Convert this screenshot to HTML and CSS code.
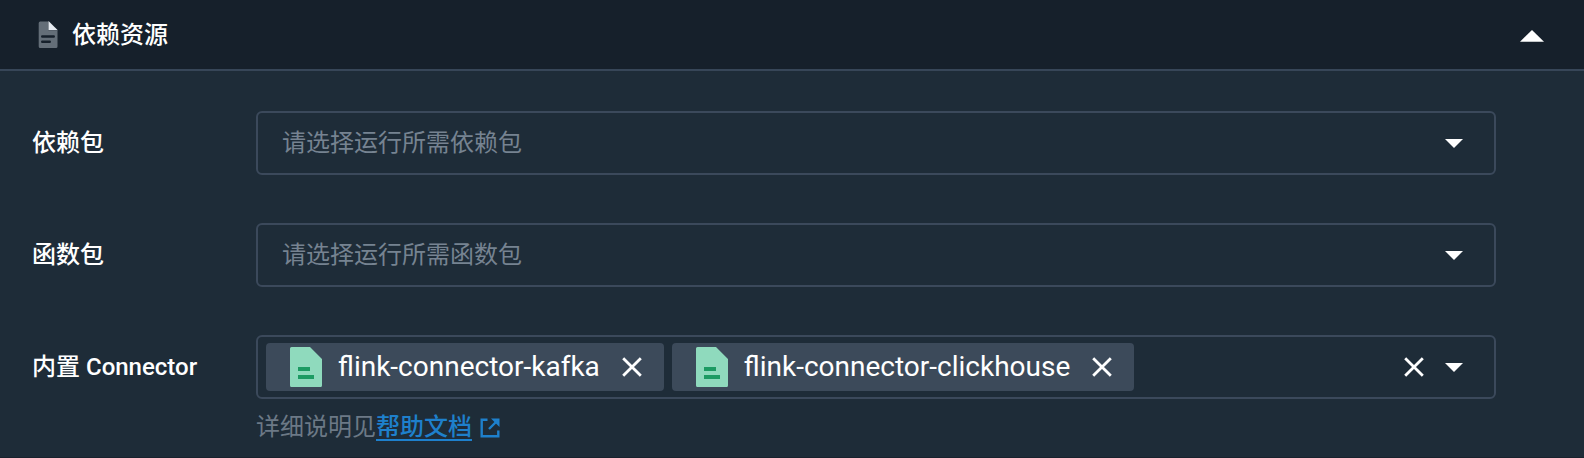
FILE: index.html
```html
<!DOCTYPE html>
<html lang="zh-CN">
<head>
<meta charset="utf-8">
<title>依赖资源</title>
<link rel="stylesheet" href="styles.css">
</head>
<body>
<section class="panel">
  <header class="panel-header">
    <svg class="header-icon" width="32" height="32" viewBox="0 0 32 32">
      <path fill="#646e78" d="M8.2 2.500h8.300v9.300h9v15.700a1.500 1.500 0 0 1-1.500 1.500H8.200a1.500 1.500 0 0 1-1.500-1.500V4a1.500 1.500 0 0 1 1.500-1.500z"/>
      <path fill="#e6ebf1" d="M16.500 2l9.300 9.300h-9.300z"/>
      <path stroke="#16202b" stroke-width="2.600" stroke-linecap="round" d="M10.300 17.500h11.400M10.300 22.800h7.400"/>
    </svg>
    <h2 class="panel-title">依赖资源</h2>
    <svg class="toggle" width="24" height="12" viewBox="0 0 24 12"><path fill="#fff" d="M12 0l12 11.700H0z"/></svg>
  </header>
  <div class="form">
    <div class="row">
      <label class="label">依赖包</label>
      <div class="select">
        <span class="placeholder">请选择运行所需依赖包</span>
        <svg class="caret" width="18" height="9" viewBox="0 0 18 9"><path fill="#fff" d="M0 0h18L9 9z"/></svg>
      </div>
    </div>
    <div class="row">
      <label class="label">函数包</label>
      <div class="select">
        <span class="placeholder">请选择运行所需函数包</span>
        <svg class="caret" width="18" height="9" viewBox="0 0 18 9"><path fill="#fff" d="M0 0h18L9 9z"/></svg>
      </div>
    </div>
    <div class="row">
      <label class="label">内置 Connector</label>
      <div class="field">
        <div class="select multi">
          <div class="tag">
            <svg class="file" width="32" height="40" viewBox="0 0 32 40"><path fill="#8fdabd" d="M1.500 0H20l12 12v26.500a1.500 1.500 0 0 1-1.500 1.500h-29A1.500 1.500 0 0 1 0 38.500v-37A1.500 1.500 0 0 1 1.500 0z"/><path fill="#1c9b63" d="M8 20h12v4H8zM8 28h16v4H8z"/></svg>
            <span class="tag-text">flink-connector-kafka</span>
            <svg class="close" width="20" height="20" viewBox="0 0 20 20"><path stroke="#fff" stroke-width="2.800" d="M1.200 1.200l17.600 17.600M18.800 1.200L1.200 18.800"/></svg>
          </div>
          <div class="tag">
            <svg class="file" width="32" height="40" viewBox="0 0 32 40"><path fill="#8fdabd" d="M1.500 0H20l12 12v26.500a1.500 1.500 0 0 1-1.500 1.500h-29A1.500 1.500 0 0 1 0 38.500v-37A1.500 1.500 0 0 1 1.500 0z"/><path fill="#1c9b63" d="M8 20h12v4H8zM8 28h16v4H8z"/></svg>
            <span class="tag-text">flink-connector-clickhouse</span>
            <svg class="close" width="20" height="20" viewBox="0 0 20 20"><path stroke="#fff" stroke-width="2.800" d="M1.200 1.200l17.600 17.600M18.800 1.200L1.200 18.800"/></svg>
          </div>
          <svg class="clear" width="20" height="20" viewBox="0 0 20 20"><path stroke="#fff" stroke-width="2.800" d="M1.200 1.200l17.600 17.600M18.800 1.200L1.200 18.800"/></svg>
          <svg class="caret" width="18" height="9" viewBox="0 0 18 9"><path fill="#fff" d="M0 0h18L9 9z"/></svg>
        </div>
        <div class="help">详细说明见<a class="link">帮助文档</a>
          <svg class="external" width="20" height="20" viewBox="0 0 20 20"><path fill="none" stroke="#1e80cc" stroke-width="2.400" d="M7.500 1.700H1.700v16.600h16.600V12.500M9 11l8-8"/><path fill="#1e80cc" d="M11 .5h8.500V9z"/></svg>
        </div>
      </div>
    </div>
  </div>
</section>
</body>
</html>
```
FILE: styles.css
```css
* { box-sizing: border-box; }
body {
  margin: 0;
  background: #1e2c38;
  color: #fff;
  font: 24px/36px Roboto, "Noto Sans CJK SC", sans-serif;
}
svg { display: block; flex: none; }
.panel { height: 458px; overflow: hidden; border-bottom: 1px solid #19222d; }
.panel-header {
  display: flex;
  align-items: center;
  height: 71px;
  padding: 0 40px 0 32px;
  background: #16202b;
  border-bottom: 2px solid #374658;
}
.panel-title { margin: 0 auto 0 8px; padding-top: 1px; font-size: 24px; font-weight: 500; }
.toggle { margin-top: 3px; }
.form { display: flex; flex-direction: column; gap: 48px; padding: 40px 88px 0 32px; }
.row { display: grid; grid-template-columns: 224px 1240px; }
.label { line-height: 65px; height: 64px; font-weight: 500; }
.select {
  display: flex;
  align-items: center;
  height: 64px;
  padding: 0 31px 0 24px;
  border: 2px solid #3b495b;
  border-radius: 6px;
}
.placeholder { flex: 1; color: #768391; }
.multi { gap: 8px; padding-left: 8px; }
.tag {
  display: flex;
  align-items: center;
  height: 48px;
  padding: 0 22px 0 24px;
  border-radius: 4px;
  background: #3c4a5a;
}
.tag-text { margin: 0 22px 0 16px; font-size: 28px; white-space: nowrap; }
.clear { margin: 0 13px 0 auto; }
.help { display: flex; align-items: center; height: 36px; margin-top: 10px; color: #6c7986; }
.link { height: 32px; margin-top: -4px; line-height: 36px; border-bottom: 2px solid #1e80cc; color: #1e80cc; font-weight: 500; }
.external { margin: 1px 0 0 8px; }
```
